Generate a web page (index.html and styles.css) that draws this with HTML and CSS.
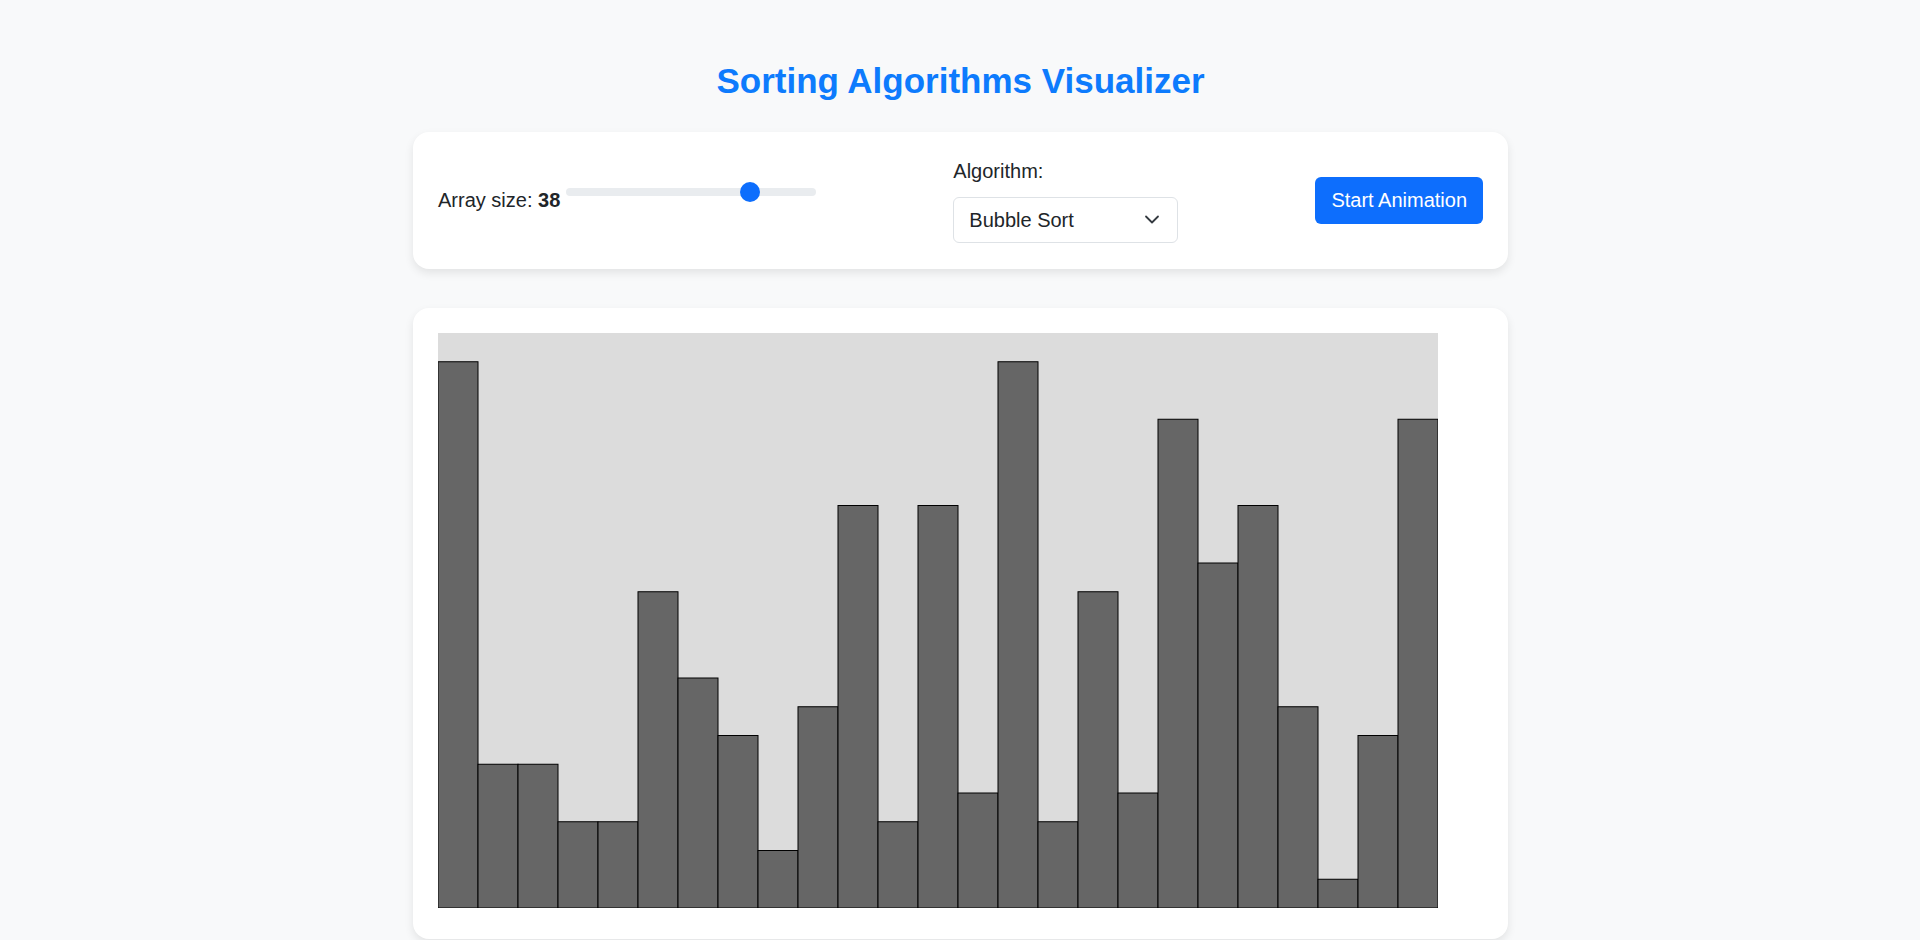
FILE: index.html
```html
<!DOCTYPE html>
<html lang="en">
<head>
<meta charset="utf-8">
<title>Sorting Algorithms Visualizer</title>
<link rel="stylesheet" href="styles.css">
</head>
<body>
<main class="page">
  <h1 class="title">Sorting Algorithms Visualizer</h1>

  <section class="card controls">
    <div class="size-group">
      <span class="size-label">Array size: <b>38</b></span>
      <input class="size-range" type="range" min="1" max="50" value="38">
    </div>

    <div class="algo-group">
      <label class="algo-label" for="algo">Algorithm:</label>
      <div class="select-wrap">
        <select id="algo" class="algo-select">
          <option>Bubble Sort</option>
          <option>Selection Sort</option>
          <option>Insertion Sort</option>
          <option>Merge Sort</option>
          <option>Quick Sort</option>
        </select>
        <svg class="chevron" width="16" height="16" viewBox="0 0 16 16" aria-hidden="true">
          <path d="M2 5.5l6 6 6-6" fill="none" stroke="#343a40" stroke-width="1.8" stroke-linecap="round" stroke-linejoin="round"/>
        </svg>
      </div>
    </div>

    <button class="start-btn" type="button">Start Animation</button>
  </section>

  <section class="card chart-card">
    <svg class="chart" width="1000" height="575" viewBox="0 0 1000 575">
      <rect class="chart-bg" x="0" y="0" width="1000" height="575"/>
      <g class="bars">
        <rect x="0" y="28.75" width="40" height="546.25"/>
        <rect x="40" y="431.25" width="40" height="143.75"/>
        <rect x="80" y="431.25" width="40" height="143.75"/>
        <rect x="120" y="488.75" width="40" height="86.25"/>
        <rect x="160" y="488.75" width="40" height="86.25"/>
        <rect x="200" y="258.75" width="40" height="316.25"/>
        <rect x="240" y="345" width="40" height="230"/>
        <rect x="280" y="402.5" width="40" height="172.5"/>
        <rect x="320" y="517.5" width="40" height="57.5"/>
        <rect x="360" y="373.75" width="40" height="201.25"/>
        <rect x="400" y="172.5" width="40" height="402.5"/>
        <rect x="440" y="488.75" width="40" height="86.25"/>
        <rect x="480" y="172.5" width="40" height="402.5"/>
        <rect x="520" y="460" width="40" height="115"/>
        <rect x="560" y="28.75" width="40" height="546.25"/>
        <rect x="600" y="488.75" width="40" height="86.25"/>
        <rect x="640" y="258.75" width="40" height="316.25"/>
        <rect x="680" y="460" width="40" height="115"/>
        <rect x="720" y="86.25" width="40" height="488.75"/>
        <rect x="760" y="230" width="40" height="345"/>
        <rect x="800" y="172.5" width="40" height="402.5"/>
        <rect x="840" y="373.75" width="40" height="201.25"/>
        <rect x="880" y="546.25" width="40" height="28.75"/>
        <rect x="920" y="402.5" width="40" height="172.5"/>
        <rect x="960" y="86.25" width="40" height="488.75"/>
      </g>
    </svg>
  </section>
</main>
</body>
</html>
```

FILE: styles.css
```css
* {
  box-sizing: border-box;
}

html, body {
  margin: 0;
  padding: 0;
}

body {
  background: #f8f9fa;
  color: #212529;
  font-family: "Liberation Sans", Arial, Helvetica, sans-serif;
  font-size: 20px;
}

.page {
  width: 1095px;
  margin-left: calc(50% - 547px);
  padding-top: 61px;
  padding-bottom: 40px;
}

.title {
  margin: 0 0 31px;
  text-align: center;
  font-size: 35px;
  font-weight: 700;
  color: #0d7bfd;
  line-height: normal;
}

.card {
  background: #ffffff;
  border-radius: 16px;
  box-shadow: 0 4px 10px rgba(0, 0, 0, 0.09);
}

.controls {
  display: flex;
  justify-content: space-between;
  align-items: center;
  padding: 25px 25px 26px;
}

.size-group {
  display: flex;
  align-items: center;
  gap: 6px;
}

.size-label b {
  font-weight: 700;
}

.size-range {
  -webkit-appearance: none;
  appearance: none;
  width: 250px;
  height: 8px;
  margin: 0 0 16px;
  background: #e9ecef;
  border-radius: 4px;
  outline: none;
}

.size-range::-webkit-slider-thumb {
  -webkit-appearance: none;
  appearance: none;
  width: 20px;
  height: 20px;
  border-radius: 50%;
  background: #0d6efd;
  border: none;
  cursor: pointer;
}

.algo-group {
  display: flex;
  flex-direction: column;
  margin-top: 3px;
}

.algo-label {
  display: block;
  margin-bottom: 14px;
  line-height: normal;
}

.select-wrap {
  position: relative;
  width: 225px;
}

.algo-select {
  -webkit-appearance: none;
  appearance: none;
  display: block;
  width: 225px;
  height: 46px;
  padding: 0 40px 0 15px;
  border: 1px solid #dee2e6;
  border-radius: 6px;
  background: #ffffff;
  color: #212529;
  font-family: inherit;
  font-size: 20px;
}

.chevron {
  position: absolute;
  right: 18px;
  top: 14px;
  pointer-events: none;
}

.start-btn {
  height: 47px;
  padding: 0 16px;
  border: none;
  border-radius: 6px;
  background: #0d6efd;
  color: #ffffff;
  font-family: inherit;
  font-size: 20px;
  cursor: pointer;
}

.chart-card {
  margin-top: 39px;
  padding: 25px 25px 31px;
}

.chart {
  display: block;
}

.chart-bg {
  fill: #dcdcdc;
}

.bars rect {
  fill: #666666;
  stroke: #000000;
  stroke-width: 1;
}
```
